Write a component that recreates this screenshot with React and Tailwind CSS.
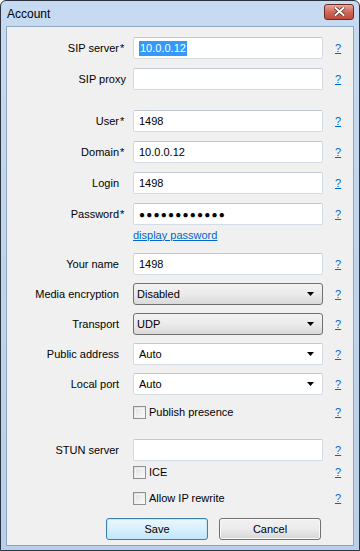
import React from 'react';

const font = { fontFamily: '"Liberation Sans", Arial, sans-serif' };

function Help() {
  return <a className="text-[11px] text-[#0066cc] underline leading-none ml-[12px] w-[8px] cursor-pointer">?</a>;
}

function Label({ text, req, wide }) {
  return (
    <div className="w-[120px] flex justify-end items-center text-[11px] text-black">
      <span>{text}</span>
      <span className={`${wide ? 'w-0' : 'w-[8px]'} pl-[1px] text-left`}>{req ? '*' : ''}</span>
    </div>
  );
}

function TextBox({ value, selected }) {
  return (
    <div className="w-[190px] h-[22px] ml-[6px] bg-white border border-[#d5dbe3] border-t-[#c1c8d2] rounded-[2px] flex items-center pl-[5px] text-[11px] text-black">
      {selected ? <span className="bg-[#3399ff] text-white px-[1px] leading-[15px]">{value}</span> : value}
    </div>
  );
}

function Arrow() {
  return (
    <svg width="8" height="4" viewBox="0 0 8 4" className="mr-[7px]">
      <path d="M0 0 H7 L3.5 4 Z" fill="#000" />
    </svg>
  );
}

function DropList({ value }) {
  return (
    <div className="w-[190px] h-[22px] ml-[6px] bg-gradient-to-b from-[#f3f3f3] via-[#ebebeb] to-[#d9d9d9] border border-[#707070] rounded-[3px] flex items-center justify-between pl-[3px] text-[11px] text-black">
      <span>{value}</span>
      <Arrow />
    </div>
  );
}

function Combo({ value }) {
  return (
    <div className="w-[190px] h-[22px] ml-[6px] bg-white border border-[#d5dbe3] border-t-[#c1c8d2] rounded-[2px] flex items-center justify-between pl-[5px] text-[11px] text-black">
      <span>{value}</span>
      <Arrow />
    </div>
  );
}

function Row({ label, req, wide, children, className = '' }) {
  return (
    <div className={`flex items-center h-[22px] ${className}`}>
      <Label text={label} req={req} wide={wide} />
      {children}
      <Help />
    </div>
  );
}

function Check({ label, className = '' }) {
  return (
    <div className={`flex items-center h-[13px] ${className}`}>
      <div className="w-[126px]" />
      <div className="w-[190px] flex items-center">
        <div className="w-[13px] h-[13px] border border-[#8f8f8f] bg-gradient-to-br from-[#dcdcdc] to-[#fbfbfb] p-[1px]">
          <div className="w-full h-full border border-[#f4f4f4] bg-gradient-to-br from-[#e4e4e4] to-[#f6f6f6]" />
        </div>
        <span className="ml-[3px] text-[11px] text-black">{label}</span>
      </div>
      <Help />
    </div>
  );
}

export default function App() {
  return (
    <div style={font} className="w-[360px] h-[551px] bg-gradient-to-b from-[#c6daf0] to-[#b8d0ea] border border-[#2b3440] rounded-t-[6px] flex flex-col">
      <div className="h-[25px] flex items-center justify-between pl-[6px] pr-[5px]">
        <span className="text-[12px] text-black">Account</span>
        <div className="w-[30px] h-[16px] -mt-[4px] rounded-[3px] border border-[#6e2a22] bg-gradient-to-b from-[#e6a89c] via-[#d0685a] to-[#c04a3a] flex items-center justify-center">
          <svg width="11" height="9" viewBox="0 0 11 9">
            <path d="M1.5 1 L9.5 8 M9.5 1 L1.5 8" stroke="#5a2019" strokeWidth="3.4" strokeLinecap="square" />
            <path d="M1.5 1 L9.5 8 M9.5 1 L1.5 8" stroke="#fff" strokeWidth="2" strokeLinecap="square" />
          </svg>
        </div>
      </div>
      <div className="mx-[5px] mb-[4px] flex-1 bg-[#f0f0f0] border border-[#8ea6c2] flex flex-col">
        <Row label="SIP server" req className="mt-[10px]"><TextBox value="10.0.0.12" selected /></Row>
        <Row label="SIP proxy" wide className="mt-[9px]"><TextBox value="" /></Row>
        <Row label="User" req className="mt-[20px]"><TextBox value="1498" /></Row>
        <Row label="Domain" req className="mt-[9px]"><TextBox value="10.0.0.12" /></Row>
        <Row label="Login" className="mt-[9px]"><TextBox value="1498" /></Row>
        <Row label="Password" req className="mt-[9px]">
          <div className="w-[190px] h-[22px] ml-[6px] bg-white border border-[#d5dbe3] border-t-[#c1c8d2] rounded-[2px] flex items-center pl-[5px] text-[10px] tracking-[1.2px] text-black">
            ●●●●●●●●●●●●
          </div>
        </Row>
        <div className="flex h-[16px] mt-[2px] items-center">
          <div className="w-[126px]" />
          <a className="text-[11px] text-[#0066cc] underline cursor-pointer">display password</a>
        </div>
        <Row label="Your name" className="mt-[10px]"><TextBox value="1498" /></Row>
        <Row label="Media encryption" className="mt-[8px]"><DropList value="Disabled" /></Row>
        <Row label="Transport" className="mt-[8px]"><DropList value="UDP" /></Row>
        <Row label="Public address" className="mt-[8px]"><Combo value="Auto" /></Row>
        <Row label="Local port" className="mt-[8px]"><Combo value="Auto" /></Row>
        <Check label="Publish presence" className="mt-[11px]" />
        <Row label="STUN server" className="mt-[20px]"><TextBox value="" /></Row>
        <Check label="ICE" className="mt-[5px]" />
        <Check label="Allow IP rewrite" className="mt-[13px]" />
        <div className="flex mt-[13px] h-[22px]">
          <div className="w-[99px]" />
          <button className="w-[102px] h-[22px] rounded-[3px] border border-[#3c7fb1] bg-gradient-to-b from-[#eaf6fd] via-[#d9f0fc] to-[#bee6fd] text-[11px] text-black shadow-[inset_0_0_0_1px_#c8e6f8]">Save</button>
          <button className="w-[102px] h-[22px] ml-[11px] rounded-[3px] border border-[#707070] bg-gradient-to-b from-[#f2f2f2] via-[#ebebeb] to-[#d6d6d6] text-[11px] text-black shadow-[inset_0_0_0_1px_#fafafa]">Cancel</button>
        </div>
      </div>
    </div>
  );
}
